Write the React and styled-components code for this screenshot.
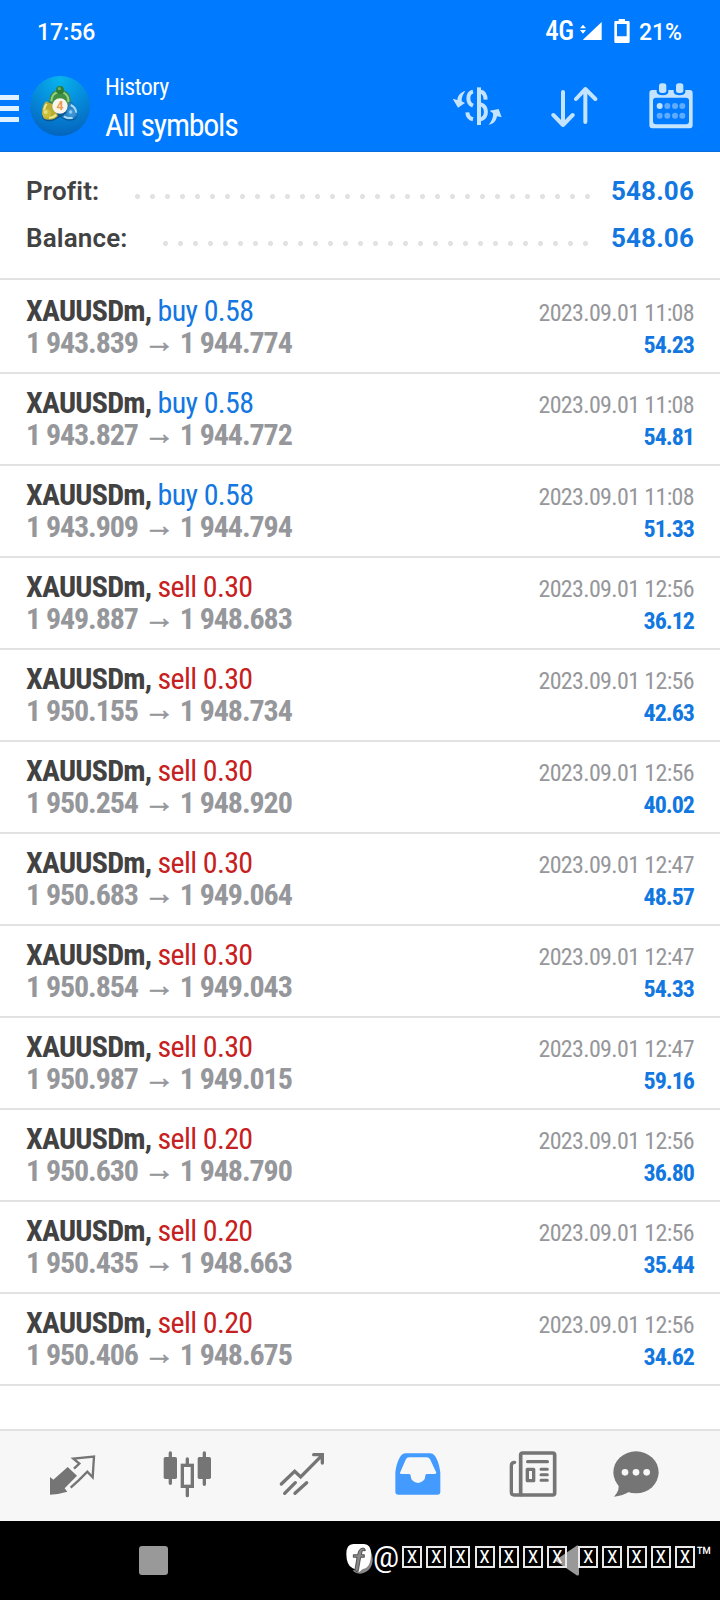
import React from 'react';
import styled, { createGlobalStyle } from 'styled-components';

const deals = [
   { side: 'buy', volume: '0.58', open: '1 943.839', close: '1 944.774', time: '2023.09.01 11:08', profit: '54.23' },
   { side: 'buy', volume: '0.58', open: '1 943.827', close: '1 944.772', time: '2023.09.01 11:08', profit: '54.81' },
   { side: 'buy', volume: '0.58', open: '1 943.909', close: '1 944.794', time: '2023.09.01 11:08', profit: '51.33' },
   { side: 'sell', volume: '0.30', open: '1 949.887', close: '1 948.683', time: '2023.09.01 12:56', profit: '36.12' },
   { side: 'sell', volume: '0.30', open: '1 950.155', close: '1 948.734', time: '2023.09.01 12:56', profit: '42.63' },
   { side: 'sell', volume: '0.30', open: '1 950.254', close: '1 948.920', time: '2023.09.01 12:56', profit: '40.02' },
   { side: 'sell', volume: '0.30', open: '1 950.683', close: '1 949.064', time: '2023.09.01 12:47', profit: '48.57' },
   { side: 'sell', volume: '0.30', open: '1 950.854', close: '1 949.043', time: '2023.09.01 12:47', profit: '54.33' },
   { side: 'sell', volume: '0.30', open: '1 950.987', close: '1 949.015', time: '2023.09.01 12:47', profit: '59.16' },
   { side: 'sell', volume: '0.20', open: '1 950.630', close: '1 948.790', time: '2023.09.01 12:56', profit: '36.80' },
   { side: 'sell', volume: '0.20', open: '1 950.435', close: '1 948.663', time: '2023.09.01 12:56', profit: '35.44' },
   { side: 'sell', volume: '0.20', open: '1 950.406', close: '1 948.675', time: '2023.09.01 12:56', profit: '34.62' },
];

const SignalIcon = () => (
   <Signal width="22" height="20" viewBox="0 0 66 60" fill="#fff">
      <path d="M65 6V60H8Z" />
      <path d="M0 25L9 14L18 25ZM0 30H18L9 41Z" />
   </Signal>
);

const BatteryIcon = () => (
   <Battery width="16" height="24" viewBox="0 0 48 72" fill="#fff">
      <path fillRule="evenodd" d="M14 0H33V6H43Q47 6 47 10V68Q47 72 43 72H5Q1 72 1 68V10Q1 6 5 6H14ZM9 15V52H38V15Z" />
   </Battery>
);

const DollarIcon = () => (
   <svg width="55" height="44" viewBox="0 0 165 132" fill="none" stroke="#c4e3ff" strokeWidth="12">
      <path d="M87 10V123" />
      <path d="M69 23C51 27 50 57 69 65" />
      <path d="M92 23C101 24 106 33 107 47" />
      <path d="M92 61C112 67 114 98 92 106" />
      <path d="M52 85C53 98 59 104 69 106" />
      <path d="M46 21C30 25 23 36 22 48L8 44L24 71L45 57L35 52C34 40 39 31 46 21Z" fill="#c4e3ff" stroke="none" />
      <path d="M116 123C133 119 139 109 141 97L155 100L146 75L119 80L129 88C131 100 124 113 116 123Z" fill="#c4e3ff" stroke="none" />
   </svg>
);

const SortIcon = () => (
   <svg width="48" height="42" viewBox="0 0 144 126" fill="none" stroke="#c4e3ff" strokeWidth="12" strokeLinecap="round" strokeLinejoin="round">
      <path d="M39 21V120M10 90L39 120L68 90" />
      <path d="M106 111V12M78 42L106 12L136 42" />
   </svg>
);

const CalendarIcon = () => (
   <svg width="46" height="48" viewBox="0 0 138 144">
      <path
         fill="#c4e3ff"
         fillRule="evenodd"
         d="M13 24H26V31Q28 40 44 40Q59 40 61 31V24H77V31Q79 40 95 40Q110 40 112 31V24H125Q134 24 134 34V130Q134 139 125 139H13Q4 139 4 130V34Q4 24 13 24ZM24 47Q15 47 15 56V118Q15 127 24 127H114Q123 127 123 118V56Q123 47 114 47Z"
      />
      <rect x="33" y="4" width="22" height="29" rx="8" fill="#c4e3ff" />
      <rect x="84" y="4" width="22" height="29" rx="8" fill="#c4e3ff" />
      {[35, 58, 81, 103].map((x, i) => (
         <g key={x} fill="#5facff">
            <circle cx={x} cy="72" r="9" fill={i === 0 ? '#c4e3ff' : '#5facff'} />
            <circle cx={x} cy="101" r="9" />
         </g>
      ))}
   </svg>
);

const AccountLogo = () => (
   <svg width="60" height="60" viewBox="0 0 180 180">
      <defs>
         <radialGradient id="sky" cx="50%" cy="5%" r="95%">
            <stop offset="0" stopColor="#08b4ec" />
            <stop offset="0.5" stopColor="#058bdb" />
            <stop offset="1" stopColor="#0465bd" />
         </radialGradient>
      </defs>
      <circle cx="90" cy="90" r="90" fill="url(#sky)" />
      <path d="M37 113C34 132 48 139 70 134L91 123L108 133C129 138 145 128 142 112L134 88L119 75C122 56 113 43 91 43C68 43 59 54 60 75L42 88Z" fill="#07457a" opacity="0.7" />
      <path d="M57 77C60 48 74 42 90 42C108 42 123 54 122 76L112 92L91 70L68 84Z" fill="#3f8f45" />
      <path d="M64 76C65 58 74 50 86 48M100 50C111 55 116 64 115 78" fill="none" stroke="#93cf80" strokeWidth="6" />
      <path d="M48 76C36 88 32 116 42 128C54 134 72 133 84 120L68 84Z" fill="#b8ae35" />
      <path d="M50 84C42 94 42 106 44 114M57 125C68 125 74 122 78 116" fill="none" stroke="#f1ea92" strokeWidth="6" />
      <path d="M118 78C136 84 147 106 141 118C134 134 112 134 94 122L108 112Z" fill="#2b82c4" />
      <path d="M122 87C131 91 138 100 138 110M102 121C110 126 120 127 128 125" fill="none" stroke="#a4dcfb" strokeWidth="6" />
      <circle cx="90" cy="42" r="12" fill="#2f7d36" />
      <circle cx="88" cy="38" r="5" fill="#6ab362" />
      <circle cx="50" cy="112" r="13" fill="#c9bf3a" />
      <circle cx="47" cy="108" r="6" fill="#e6de7c" />
      <circle cx="124" cy="111" r="12" fill="#3b93d3" />
      <circle cx="122" cy="108" r="5" fill="#8bcdf4" />
      <circle cx="90" cy="90" r="23" fill="#f6f5ee" />
      <text x="90" y="103" textAnchor="middle" fontFamily="Roboto, sans-serif" fontSize="37" fontWeight="700" fill="#ee9a51">4</text>
   </svg>
);

const QuotesIcon = () => (
   <TabSvg viewBox="0 0 144 144">
      <path d="M6 78L16 86L59 48L87 74L50 112L58 122Q32 130 6 131Z" />
      <path d="M78 53L94 38L76 23L138 17L134 79L118 62L92 88L68 110" fill="none" stroke="#757575" strokeWidth="7" />
   </TabSvg>
);

const ChartIcon = () => (
   <TabSvg viewBox="0 0 144 144" stroke="#757575" strokeWidth="10" strokeLinecap="round">
      <path d="M22 6V97M124 6V100M73 24V40M73 108V134" />
      <rect x="2" y="18" width="40" height="66" rx="5" stroke="none" />
      <rect x="104" y="18" width="40" height="66" rx="5" stroke="none" />
      <rect x="58" y="43" width="30" height="63" fill="none" />
   </TabSvg>
);

const TradeIcon = () => (
   <TabSvg viewBox="0 0 144 144" stroke="#757575" strokeWidth="10" strokeLinecap="round">
      <path fill="none" d="M10 99L50 61L68 78L132 13M107 11H133V36M20 127L52 95M51 127L86 95" />
   </TabSvg>
);

const HistoryIcon = () => (
   <TabSvg viewBox="0 0 144 144">
      <path
         fill="#439bff"
         fillRule="evenodd"
         d="M4 66C6 45 12 25 22 13Q27 7 34 7H109Q117 7 121 13C131 25 137 45 139 66V122Q139 131 130 131H13Q4 131 4 122ZM18 65L35 26Q38 19 46 19H98Q105 19 109 26L127 65Q126 69 122 69H98Q94 69 94 74A22 22 0 0 1 50 74Q50 69 45 69H22Q18 69 18 65Z"
      />
   </TabSvg>
);

const NewsIcon = () => (
   <TabSvg viewBox="0 0 144 144" stroke="#757575" strokeLinecap="round">
      <rect x="35" y="6" width="102" height="126" rx="6" fill="none" strokeWidth="11" />
      <path d="M17 34Q7 34 7 44V124Q7 132 15 132H36" fill="none" strokeWidth="10" />
      <path d="M56 32H115" strokeWidth="10" />
      <path d="M96 55H115M96 71H115M96 88H115" strokeWidth="9" />
      <rect x="55" y="55" width="19" height="34" fill="none" strokeWidth="10" strokeLinejoin="round" />
   </TabSvg>
);

const ChatIcon = () => (
   <TabSvg viewBox="0 0 144 144">
      <ellipse cx="72" cy="64" rx="68" ry="63" />
      <path d="M18 95Q26 115 6 137Q32 136 54 121Z" />
      <circle cx="39" cy="64" r="10" fill="#f7f7f7" />
      <circle cx="72" cy="64" r="10" fill="#f7f7f7" />
      <circle cx="104" cy="64" r="10" fill="#f7f7f7" />
   </TabSvg>
);

const Deal = ({ deal }) => (
   <Row>
      <Title>
         <b>XAUUSDm,</b> <Side side={deal.side}>{deal.side} {deal.volume}</Side>
      </Title>
      <Time>{deal.time}</Time>
      <Prices>
         {deal.open}<Arrow>→</Arrow>{deal.close}
      </Prices>
      <Profit>{deal.profit}</Profit>
   </Row>
);

const App = () => (
   <>
      <GlobalStyle />
      <Screen>
         <StatusBar>
            <Clock>17:56</Clock>
            <Network>4G</Network>
            <SignalIcon />
            <BatteryIcon />
            <Percent>21%</Percent>
         </StatusBar>
         <Header>
            <MenuButton>
               <span />
               <span />
               <span />
            </MenuButton>
            <AccountLogo />
            <Heading>
               <Caption>History</Caption>
               <Symbols>All symbols</Symbols>
            </Heading>
            <Actions>
               <DollarIcon />
               <SortIcon />
               <CalendarIcon />
            </Actions>
         </Header>
         <Summary>
            <SummaryLine>Profit:<Leader /><Amount>548.06</Amount></SummaryLine>
            <SummaryLine>Balance:<Leader /><Amount>548.06</Amount></SummaryLine>
         </Summary>
         <List>
            {deals.map((deal, i) => <Deal key={i} deal={deal} />)}
         </List>
         <Tabs>
            <QuotesIcon />
            <ChartIcon />
            <TradeIcon />
            <HistoryIcon />
            <NewsIcon />
            <ChatIcon />
         </Tabs>
         <SystemBar>
            <Recents />
            <Back width="24" height="31" viewBox="0 0 24 31">
               <path d="M0 15.5L22 .5Q24 0 24 2V29Q24 31 22 30.5Z" fill="#999" />
            </Back>
            <Watermark>
               <svg width="27" height="31" viewBox="0 0 81 93">
                  <path d="M74 20Q88 52 70 76Q44 100 20 80L38 70Z" fill="#888" />
                  <path d="M1 30Q1 0 22 0H54Q75 0 75 30Q75 62 60 72Q48 74 40 84Q34 76 20 73Q1 64 1 30Z" fill="#fff" />
                  <path d="M58 20Q58 12 51 12Q38 13 35 32H22V40H33L27 76Q28 86 37 80L44 40H55V32H46L49 20Z" fill="#888" stroke="#222" strokeWidth="2" />
               </svg>
               <At>@</At>
               <Boxes>{[...Array(7)].map((_, i) => <Box key={i}>X</Box>)}</Boxes>
               <Boxes>{[...Array(5)].map((_, i) => <Box key={i}>X</Box>)}</Boxes>
               <Mark>™</Mark>
            </Watermark>
         </SystemBar>
      </Screen>
   </>
);

export default App;

const GlobalStyle = createGlobalStyle`
   * {
      box-sizing: border-box;
   }
   body {
      margin: 0;
      background: #fff;
      font-family: Roboto, "Liberation Sans", sans-serif;
   }
   svg {
      display: block;
      flex: none;
   }
`;

const Screen = styled.div`
   display: flex;
   flex-direction: column;
   width: 720px;
   height: 1600px;
   overflow: hidden;
`;

const StatusBar = styled.div`
   display: flex;
   align-items: center;
   height: 64px;
   padding: 0 38px 0 37px;
   background: #007aff;
   color: #fff;
   font-size: 23px;
   font-weight: 500;
`;

const Clock = styled.span`
   margin-right: auto;
`;

const Network = styled.span`
   margin: 0 6px 2px 0;
   font-size: 27px;
   font-stretch: 75%;
   letter-spacing: -0.3px;
`;

const Signal = styled.svg`
   margin: 0 12px 4px 0;
`;

const Battery = styled.svg`
   margin-bottom: 2px;
`;

const Percent = styled.span`
   margin-left: 9px;
`;

const Header = styled.div`
   display: flex;
   align-items: center;
   height: 88px;
   padding: 0 26px 3px 0;
   background: #007aff;
   border-bottom: 1px solid #0c6edb;
   color: #fff;
`;

const MenuButton = styled.div`
   display: flex;
   flex-direction: column;
   gap: 6px;
   width: 30px;
   margin-top: 4px;
   span {
      width: 19px;
      height: 5px;
      background: #e0f2ff;
   }
`;

const Heading = styled.div`
   display: flex;
   flex-direction: column;
   margin: 2px 0 0 15px;
   font-stretch: 75%;
   font-weight: 450;
`;

const Caption = styled.span`
   font-size: 24px;
   line-height: 36px;
   letter-spacing: -0.6px;
`;

const Symbols = styled.span`
   font-size: 32px;
   line-height: 40px;
   letter-spacing: -1.25px;
`;

const Actions = styled.div`
   display: flex;
   align-items: center;
   gap: 45px;
   margin-left: auto;
   svg:last-child {
      margin-left: 5px;
   }
`;

const Summary = styled.div`
   height: 128px;
   padding: 15px 26px 0;
   border-bottom: 2px solid #e2e2e2;
`;

const SummaryLine = styled.div`
   display: flex;
   align-items: center;
   height: 47px;
   color: #424242;
   font-size: 26px;
   font-weight: 600;
   letter-spacing: 0.15px;
`;

const Leader = styled.span`
   flex: 1;
   height: 15px;
   margin: 12px 16px 0 30.5px;
   background: radial-gradient(circle, #e2e2e2 2.2px, transparent 2.8px) 0 0 / 15px 15px repeat-x;
`;

const Amount = styled.span`
   color: #1277e0;
   font-weight: 700;
`;

const List = styled.div`
   flex: 1;
   padding-top: 2px;
`;

const Row = styled.div`
   display: grid;
   grid-template-columns: 1fr auto;
   grid-template-rows: 32px 32px;
   align-items: baseline;
   height: 92px;
   padding: 13px 26px 0;
   border-bottom: 2px solid #e2e2e2;
   font-size: 30px;
   font-stretch: 75%;
   line-height: 32px;
   white-space: nowrap;
`;

const Title = styled.div`
   color: #424242;
   letter-spacing: -0.75px;
`;

const Side = styled.span`
   color: ${({ side }) => (side === 'buy' ? '#1277e0' : '#c62020')};
   letter-spacing: -0.65px;
`;

const Time = styled.div`
   color: #96979b;
   font-size: 24px;
   letter-spacing: -0.65px;
   text-align: right;
`;

const Prices = styled.div`
   color: #96979b;
   font-weight: 700;
   letter-spacing: -1.1px;
`;

const Arrow = styled.span`
   display: inline-block;
   width: 42px;
   text-align: center;
   font-size: 31px;
   line-height: 20px;
   vertical-align: 1px;
   -webkit-text-stroke: 0.6px #96979b;
`;

const Profit = styled.div`
   color: #1277e0;
   font-size: 24px;
   font-weight: 700;
   letter-spacing: -1px;
   text-align: right;
`;

const Tabs = styled.div`
   display: grid;
   grid-template-columns: repeat(5, 115.2px) 91px;
   justify-items: center;
   height: 92px;
   padding: 20px 0 0 14.5px;
   background: #f7f7f7;
   border-top: 2px solid #e2e2e2;
`;

const TabSvg = styled.svg`
   width: 48px;
   height: 48px;
   fill: #757575;
`;

const SystemBar = styled.div`
   position: relative;
   display: flex;
   align-items: flex-start;
   height: 79px;
   padding: 24px 141px 0 139px;
   background: #000;
`;

const Recents = styled.div`
   width: 29px;
   height: 29px;
   margin-top: 1px;
   border-radius: 3px;
   background: #999;
`;

const Back = styled.svg`
   margin-left: auto;
`;

/* lies over the back button */
const Watermark = styled.div`
   position: absolute;
   top: 23px;
   left: 346px;
   display: flex;
   color: #fff;
`;

const At = styled.span`
   width: 29px;
   font-size: 29px;
   line-height: 26px;
`;

const Boxes = styled.span`
   display: flex;
   gap: 4.2px;
   margin: 2px 11px 0 0;
   & + & {
      margin-right: 1px;
   }
`;

const Box = styled.span`
   display: flex;
   justify-content: center;
   width: 20px;
   height: 22px;
   border: 2px solid #e8e8e8;
   font-size: 19px;
   line-height: 18px;
   font-stretch: 85%;
`;

const Mark = styled.span`
   font-size: 27px;
   line-height: 27px;
`;
